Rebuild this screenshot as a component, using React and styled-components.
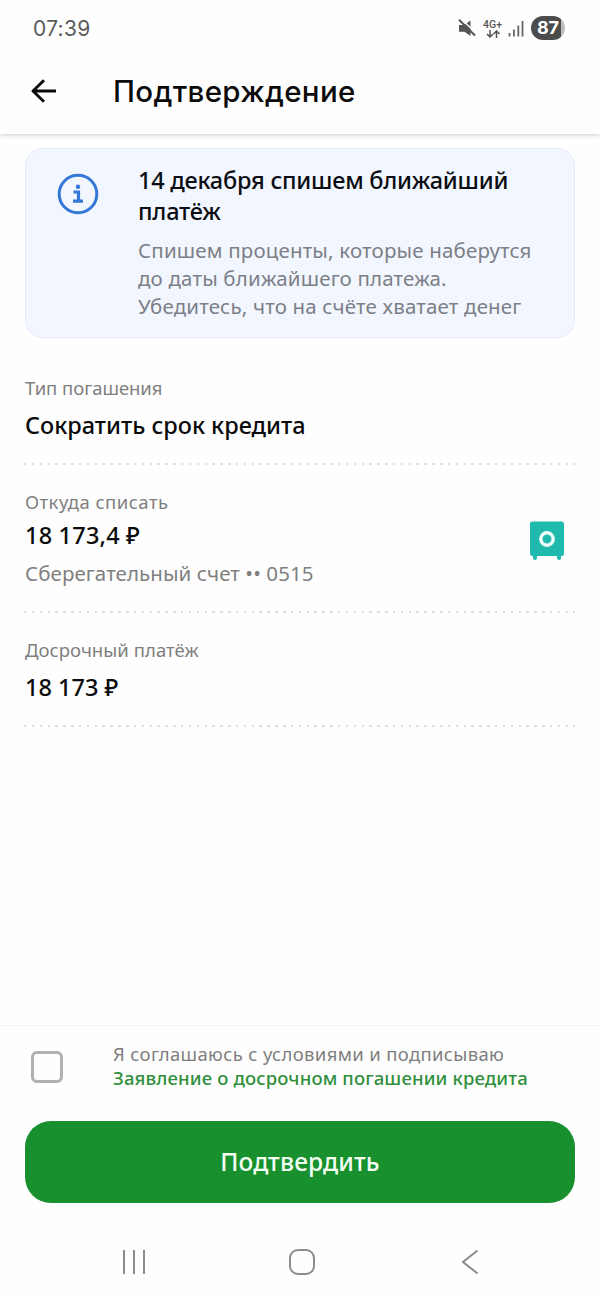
import React from 'react';
import styled, { createGlobalStyle } from 'styled-components';

const GlobalStyle = createGlobalStyle`
  * {
    box-sizing: border-box;
  }
  body {
    margin: 0;
    background: #fefefe;
    font-family: "Noto Sans", "Open Sans", sans-serif;
  }
`;

const App = () => {
  return (
    <>
      <GlobalStyle />
      <Screen>
        <StatusBar>
          <Time>07:39</Time>
          <StatusIcons>
            <svg width="18" height="18" viewBox="0 0 18 18">
              <path d="M1 6h5L12.500 1.500v15.500L6.500 12.800H1z" fill="#555" />
              <path d="M2.800 -0.500L19 15" stroke="#fefefe" strokeWidth="1.400" />
              <path d="M1 0.800L17 16.500" stroke="#555" strokeWidth="2" />
            </svg>
            <Network>
              <span>4G+</span>
              <svg width="14" height="8" viewBox="0 0 14 8">
                <path
                  d="M4 0v7M1 4l3 3 3-3M10.500 8V1M7.500 4l3-3 3 3"
                  fill="none"
                  stroke="#555"
                  strokeWidth="1.5"
                />
              </svg>
            </Network>
            <svg width="16" height="17" viewBox="0 0 16 17">
              <path
                d="M1.500 16.500v-3.500M5.900 16.500v-7M10.300 16.500v-11M14.500 16.500V1"
                stroke="#666"
                strokeWidth="1.8"
              />
            </svg>
            <Battery>87</Battery>
          </StatusIcons>
        </StatusBar>

        <Header>
          <Back aria-label="Назад">
            <svg width="26" height="26" viewBox="0 0 26 26">
              <path
                d="M13 2.200L2 13l11 10.800M2 13h23"
                fill="none"
                stroke="#0b0b0b"
                strokeWidth="2.900"
                strokeLinejoin="round"
              />
            </svg>
          </Back>
          <Title>Подтверждение</Title>
        </Header>

        <Content>
          <Notice>
            <svg width="42" height="42" viewBox="0 0 42 42">
              <circle cx="21" cy="21" r="18.800" fill="none" stroke="#3577d6" strokeWidth="3" />
              <circle cx="21" cy="13.800" r="2.200" fill="#3577d6" />
              <path d="M16.500 19h5v9M16 28.200h10" fill="none" stroke="#3577d6" strokeWidth="3.200" />
            </svg>
            <div>
              <NoticeTitle>
                14 декабря спишем ближайший
                <br />
                платёж
              </NoticeTitle>
              <NoticeText>
                Спишем проценты, которые наберутся
                <br />
                до даты ближайшего платежа.
                <br />
                Убедитесь, что на счёте хватает денег
              </NoticeText>
            </div>
          </Notice>

          <Row $top={38} $bottom={24}>
            <div>
              <Label $spacing={-0.05}>Тип погашения</Label>
              <Value $gap={9}>Сократить срок кредита</Value>
            </div>
          </Row>
          <Row $top={25} $bottom={26}>
            <div>
              <Label $spacing={0.46}>Откуда списать</Label>
              <Value $gap={5} $spacing={0.2}>
                18 173,4 ₽
              </Value>
              <Account>Сберегательный счет •• 0515</Account>
            </div>
            <SafeIcon width="36" height="40" viewBox="0 0 36 40">
              <path
                d="M3.500 0.500h29a2.500 2.500 0 0 1 2.500 2.500v29.500a2.500 2.500 0 0 1-2.500 2.500h-0.500v2a2 2 0 0 1-4 0v-2H8v2a2 2 0 0 1-4 0v-2h-0.500a2.500 2.500 0 0 1-2.500-2.500V3a2.500 2.500 0 0 1 2.500-2.500z"
                fill="#1fb9ad"
              />
              <circle cx="18" cy="18" r="6.200" fill="none" stroke="#f4fffd" strokeWidth="3.400" />
            </SafeIcon>
          </Row>
          <Row $top={25} $bottom={24}>
            <div>
              <Label $spacing={0.05}>Досрочный платёж</Label>
              <Value $gap={9}>18 173 ₽</Value>
            </div>
          </Row>
        </Content>

        <Footer>
          <Agreement>
            <Checkbox />
            <AgreementText>
              Я соглашаюсь с условиями и подписываю
              <DocLink>Заявление о досрочном погашении кредита</DocLink>
            </AgreementText>
          </Agreement>
          <Submit>Подтвердить</Submit>
        </Footer>

        <NavBar>
          <svg width="26" height="26" viewBox="0 0 26 26">
            <path d="M3 1v24M13 1v24M23 1v24" stroke="#8c8c8c" strokeWidth="2" />
          </svg>
          <svg width="26" height="26" viewBox="0 0 26 26">
            <rect x="1" y="1" width="24" height="24" rx="8" fill="none" stroke="#8c8c8c" strokeWidth="2" />
          </svg>
          <svg width="26" height="26" viewBox="0 0 26 26">
            <path d="M20.500 1.500L6 13l14.500 11.500" fill="none" stroke="#8c8c8c" strokeWidth="2" />
          </svg>
        </NavBar>
      </Screen>
    </>
  );
};

export default App;

const Screen = styled.div`
  height: 1299px;
  display: flex;
  flex-direction: column;
  overflow: hidden;
`;
const StatusBar = styled.div`
  height: 56px;
  padding: 0 35px 0 33px;
  display: flex;
  align-items: center;
  justify-content: space-between;
`;
const Time = styled.span`
  font-family: Inter, sans-serif;
  font-size: 21px;
  letter-spacing: 0.3px;
  color: #5c5c5c;
`;
const StatusIcons = styled.div`
  display: flex;
  align-items: center;
  gap: 7px;
`;
const Network = styled.div`
  display: flex;
  flex-direction: column;
  align-items: center;
  margin: 2px -1px 0 0;
  font-family: Roboto, sans-serif;
  font-size: 10.5px;
  font-weight: 500;
  line-height: 10px;
  color: #555;
`;
const Battery = styled.span`
  width: 34px;
  height: 24px;
  border-radius: 12px;
  background: linear-gradient(to right, #4c4c4c 88%, #bdbdbd 88%);
  color: #fff;
  font-family: Inter, sans-serif;
  font-size: 18px;
  font-weight: 700;
  line-height: 24px;
  text-align: center;
`;
const Header = styled.header`
  height: 78px;
  padding: 0 31px 8px;
  display: flex;
  align-items: center;
  gap: 56px;
  box-shadow: 0 1px 5px rgba(0, 0, 0, 0.2);
  clip-path: inset(0 0 -8px 0);
`;
const Back = styled.button`
  border: 0;
  padding: 0;
  background: none;
  display: flex;
`;
const Title = styled.h1`
  margin: 0;
  font-family: Inter, sans-serif;
  font-size: 29.5px;
  font-weight: 500;
  line-height: 40px;
  letter-spacing: 0.32px;
  color: #0b0b0b;
`;
const Content = styled.main`
  flex: 1;
  padding: 14px 25px 0;
`;
const Notice = styled.section`
  height: 190px;
  padding: 16px 0 0 31px;
  display: flex;
  gap: 39px;
  border: 1px solid #e6ebf8;
  border-radius: 18px;
  background: #f2f6ff;
  white-space: nowrap;

  > svg {
    margin-top: 8px;
    flex: none;
  }
`;
const NoticeTitle = styled.h2`
  margin: 0 0 9px;
  font-size: 23.5px;
  font-weight: 500;
  line-height: 31px;
  letter-spacing: -0.23px;
  color: #0b0d12;
`;
const NoticeText = styled.p`
  margin: 0;
  font-size: 20.5px;
  line-height: 28px;
  letter-spacing: 0.17px;
  color: #7c7f87;
`;
const Row = styled.section`
  margin-left: -1px;
  padding: ${(props) => props.$top}px 10px ${(props) => props.$bottom}px 1px;
  display: flex;
  align-items: center;
  justify-content: space-between;
  background: repeating-linear-gradient(to right, #dedede 0 2.5px, transparent 2.5px 7.85px) 0 100% / 100% 2px
    no-repeat;
`;
const SafeIcon = styled.svg`
  margin-top: 4px;
`;
const Label = styled.div`
  font-size: 18.5px;
  line-height: 24px;
  letter-spacing: ${(props) => props.$spacing}px;
  color: #7f7f7f;
`;
const Value = styled.div`
  margin-top: ${(props) => props.$gap}px;
  font-size: 23.5px;
  font-weight: 500;
  line-height: 32px;
  letter-spacing: ${(props) => props.$spacing || 0}px;
  color: #0b0b0b;
`;
const Account = styled.div`
  margin-top: 8px;
  font-size: 20.5px;
  line-height: 28px;
  letter-spacing: 0.08px;
  color: #7f7f7f;
`;
const Footer = styled.footer`
  height: 178px;
  padding: 16px 25px 0;
  border-top: 1px solid #f3f3f3;
`;
const Agreement = styled.label`
  display: flex;
  gap: 50px;
  padding-left: 6px;
  white-space: nowrap;
`;
const Checkbox = styled.span`
  width: 32px;
  height: 32px;
  margin-top: 9px;
  border: 3px solid #b0b0b0;
  border-radius: 6px;
`;
const AgreementText = styled.span`
  font-size: 18.5px;
  line-height: 24px;
  letter-spacing: 0.34px;
  color: #7f7f7f;
`;
const DocLink = styled.span`
  display: block;
  font-weight: 500;
  letter-spacing: 0.15px;
  color: #2f8f3c;
`;
const Submit = styled.button`
  width: 100%;
  height: 82px;
  margin-top: 31px;
  padding: 0 0 1px;
  border: 0;
  border-radius: 26px;
  background: #18902e;
  color: #f4fff4;
  font-family: inherit;
  font-size: 24.5px;
  font-weight: 500;
  letter-spacing: 0.15px;
`;
const NavBar = styled.nav`
  height: 96px;
  padding: 0 117px 0 121px;
  display: flex;
  justify-content: space-between;

  svg {
    margin-top: 46px;
  }
`;
